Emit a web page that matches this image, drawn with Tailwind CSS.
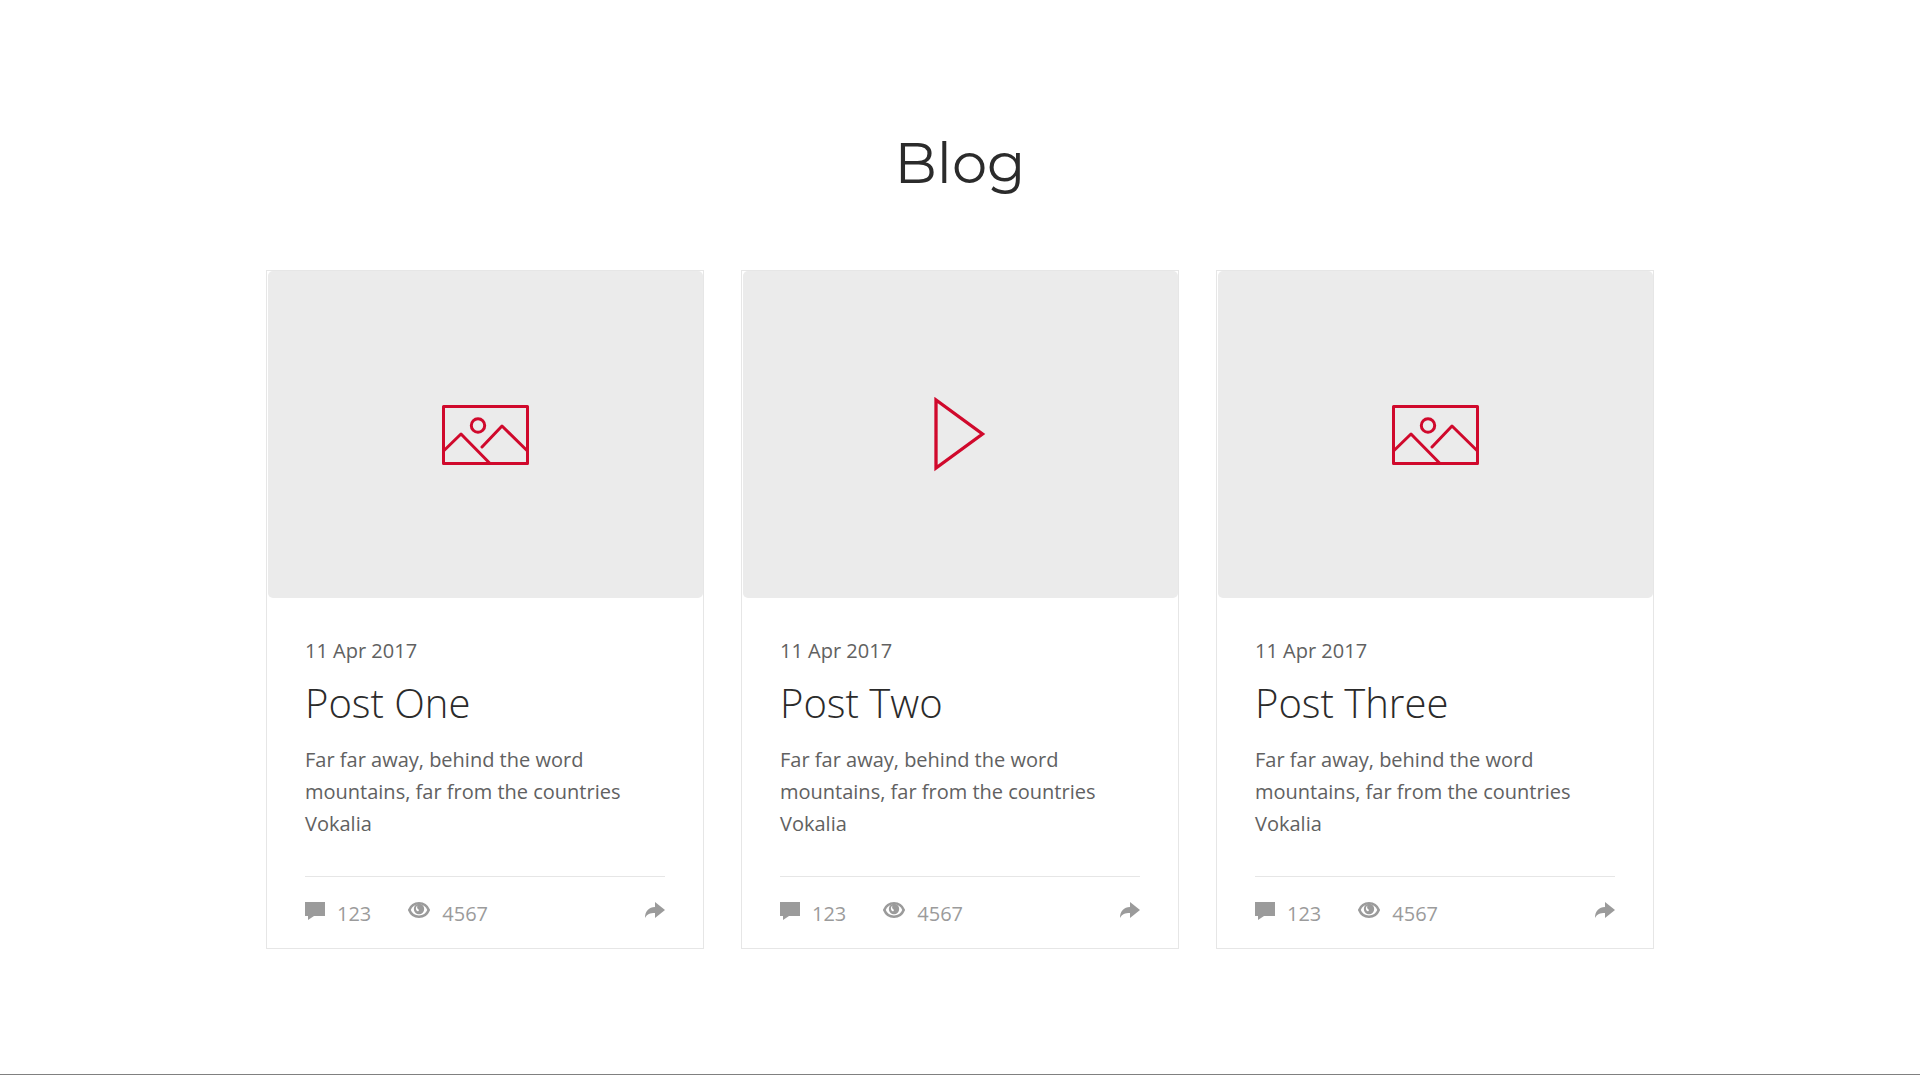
<!DOCTYPE html>
<html lang="en">
<head>
<meta charset="utf-8">
<meta name="viewport" content="width=device-width, initial-scale=1">
<title>Blog</title>
<script src="https://cdn.jsdelivr.net/npm/@tailwindcss/browser@4"></script>
</head>
<body class="flex min-h-screen flex-col border-b border-[#808080] bg-white font-['Open_Sans',sans-serif] text-xl text-[#616161]">
<svg class="hidden" aria-hidden="true">
  <symbol id="picture" viewBox="0 0 87 60">
    <g fill="none" stroke="#d0092c" stroke-width="3" stroke-linejoin="round" stroke-linecap="round">
      <path d="M1.5 1.5H85.5V58.5H1.5ZM1.5 46L19 29L47.500 58M40 42L60 21L85.500 46"/>
      <circle cx="36" cy="20.500" r="6.700"/>
    </g>
  </symbol>
  <symbol id="play" viewBox="0 0 53 75">
    <path d="M2 3V71L48.500 37Z" fill="none" stroke="#d0092c" stroke-width="3.300"/>
  </symbol>
  <symbol id="comment" viewBox="0 0 20 18">
    <path d="M0 0H20V14H9L3 18V14H0Z" fill="currentColor"/>
  </symbol>
  <symbol id="eye" viewBox="0 0 22 16">
    <path d="M1.300 8C3 3.800 6 1.300 11 1.300S19 3.800 20.700 8C19 12.200 16 14.700 11 14.700S3 12.200 1.300 8Z" fill="none" stroke="currentColor" stroke-width="2.600"/>
    <circle cx="11" cy="7" r="5.200" fill="currentColor"/>
    <path d="M9.500 3.500C7.300 5 7.500 8 9.500 9.300C10.800 9.300 11.200 8.200 10.600 7.400C9 7 8.800 5 9.500 3.500Z" fill="#fff"/>
  </symbol>
  <symbol id="share" viewBox="0 0 20 16">
    <path d="M10 0L20 8L10 16V11C5 11 2 12 0 16C0 9 4 5 10 5Z" fill="currentColor"/>
  </symbol>
</svg>
<main class="mx-auto w-full max-w-[1428px] px-5 pt-32">
  <h1 class="text-center font-['Montserrat','Inter',sans-serif] text-[56px] leading-[70px] font-normal text-[#2b2b2b]">Blog</h1>
  <div class="mt-18 grid gap-[37px] md:grid-cols-3">

    <article class="border border-[#e6e6e6]">
      <div class="ml-px flex aspect-[435/327] items-center justify-center rounded-[5px] bg-[#ebebeb]">
        <svg class="h-[60px] w-[87px]" role="img" aria-label="Picture"><use href="#picture"/></svg>
      </div>
      <div class="px-[38px] pt-[37px]">
        <time class="block leading-8" datetime="2017-04-11">11 Apr 2017</time>
        <h2 class="mt-1.5 text-[40px] leading-[60px] font-light text-[#2b2b2b]">Post One</h2>
        <p class="mt-[11px] leading-8">Far far away, behind the word mountains, far from the countries Vokalia</p>
        <footer class="mt-9 flex h-[72px] items-start border-t border-[#e6e6e6] pt-5 leading-[34px] text-[#9b9b9b]">
          <a href="#" class="flex gap-3"><svg class="mt-[5px] h-[18px] w-5" aria-label="Comments"><use href="#comment"/></svg>123</a>
          <span class="ml-[37px] flex gap-3"><svg class="mt-[5px] h-4 w-[22px]" aria-label="Views"><use href="#eye"/></svg>4567</span>
          <a href="#" class="mt-[5px] ml-auto" aria-label="Share"><svg class="h-4 w-5"><use href="#share"/></svg></a>
        </footer>
      </div>
    </article>

    <article class="border border-[#e6e6e6]">
      <div class="ml-px flex aspect-[435/327] items-center justify-center rounded-[5px] bg-[#ebebeb]">
        <svg class="h-[75px] w-[53px]" role="img" aria-label="Video"><use href="#play"/></svg>
      </div>
      <div class="px-[38px] pt-[37px]">
        <time class="block leading-8" datetime="2017-04-11">11 Apr 2017</time>
        <h2 class="mt-1.5 text-[40px] leading-[60px] font-light text-[#2b2b2b]">Post Two</h2>
        <p class="mt-[11px] leading-8">Far far away, behind the word mountains, far from the countries Vokalia</p>
        <footer class="mt-9 flex h-[72px] items-start border-t border-[#e6e6e6] pt-5 leading-[34px] text-[#9b9b9b]">
          <a href="#" class="flex gap-3"><svg class="mt-[5px] h-[18px] w-5" aria-label="Comments"><use href="#comment"/></svg>123</a>
          <span class="ml-[37px] flex gap-3"><svg class="mt-[5px] h-4 w-[22px]" aria-label="Views"><use href="#eye"/></svg>4567</span>
          <a href="#" class="mt-[5px] ml-auto" aria-label="Share"><svg class="h-4 w-5"><use href="#share"/></svg></a>
        </footer>
      </div>
    </article>

    <article class="border border-[#e6e6e6]">
      <div class="ml-px flex aspect-[435/327] items-center justify-center rounded-[5px] bg-[#ebebeb]">
        <svg class="h-[60px] w-[87px]" role="img" aria-label="Picture"><use href="#picture"/></svg>
      </div>
      <div class="px-[38px] pt-[37px]">
        <time class="block leading-8" datetime="2017-04-11">11 Apr 2017</time>
        <h2 class="mt-1.5 text-[40px] leading-[60px] font-light text-[#2b2b2b]">Post Three</h2>
        <p class="mt-[11px] leading-8">Far far away, behind the word mountains, far from the countries Vokalia</p>
        <footer class="mt-9 flex h-[72px] items-start border-t border-[#e6e6e6] pt-5 leading-[34px] text-[#9b9b9b]">
          <a href="#" class="flex gap-3"><svg class="mt-[5px] h-[18px] w-5" aria-label="Comments"><use href="#comment"/></svg>123</a>
          <span class="ml-[37px] flex gap-3"><svg class="mt-[5px] h-4 w-[22px]" aria-label="Views"><use href="#eye"/></svg>4567</span>
          <a href="#" class="mt-[5px] ml-auto" aria-label="Share"><svg class="h-4 w-5"><use href="#share"/></svg></a>
        </footer>
      </div>
    </article>

  </div>
</main>
</body>
</html>
